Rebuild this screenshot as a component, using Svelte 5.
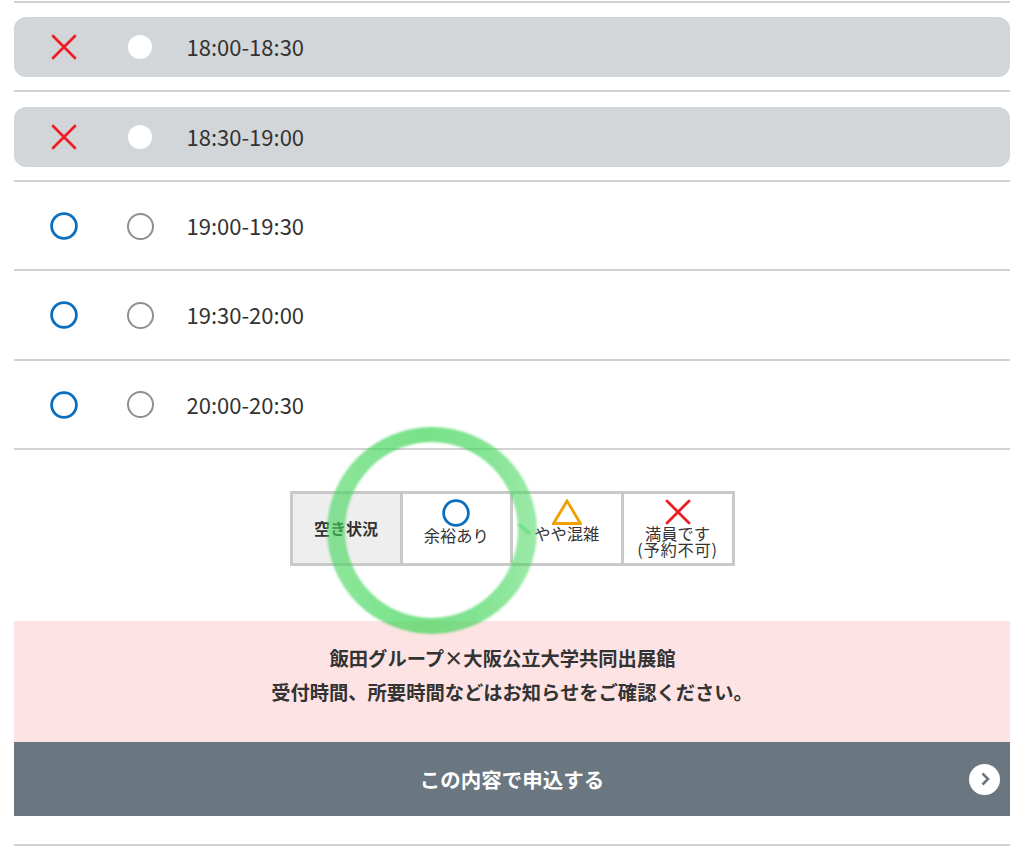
<script>
  const rows = [
    { time: '18:00-18:30', full: true },
    { time: '18:30-19:00', full: true },
    { time: '19:00-19:30', full: false },
    { time: '19:30-20:00', full: false },
    { time: '20:00-20:30', full: false }
  ];
</script>

<main>
  <ul class="slots">
    {#each rows as row}
      <li class="slot">
        <div class="slot_inner" class:full={row.full}>
          <span class="status">
            {#if row.full}
              <svg width="26" height="26" viewBox="0 0 26 26"><path d="M2 2 L24 24 M24 2 L2 24" stroke="#ee1c25" stroke-width="2.8" stroke-linecap="round" fill="none"/></svg>
            {:else}
              <svg width="28" height="28" viewBox="0 0 28 28"><circle cx="14" cy="14" r="12.4" stroke="#0b6fbe" stroke-width="2.8" fill="none"/></svg>
            {/if}
          </span>
          <span class="radio"></span>
          <span class="time">{row.time}</span>
        </div>
      </li>
    {/each}
  </ul>

  <div class="legend">
    <div class="cell head">空き状況</div>
    <div class="cell">
      <svg width="28" height="28" viewBox="0 0 28 28"><circle cx="14" cy="14" r="12.4" stroke="#0b6fbe" stroke-width="2.8" fill="none"/></svg>
      <span>余裕あり</span>
    </div>
    <div class="cell">
      <svg width="30" height="26" viewBox="0 0 30 26"><path d="M15 2 L28.5 24.5 L1.5 24.5 Z" stroke="#f0a000" stroke-width="2.8" fill="none"/></svg>
      <span>やや混雑</span>
    </div>
    <div class="cell">
      <svg width="26" height="26" viewBox="0 0 26 26"><path d="M2 2 L24 24 M24 2 L2 24" stroke="#ee1c25" stroke-width="2.8" stroke-linecap="round" fill="none"/></svg>
      <span>満員です<br /><span class="paren">(予約不可)</span></span>
    </div>
  </div>

  <div class="notice">
    <p class="first">飯田グループ×大阪公立大学共同出展館</p>
    <p>受付時間、所要時間などはお知らせをご確認ください。</p>
  </div>

  <button class="submit">
    この内容で申込する
    <span class="arrow">
      <svg width="14" height="14" viewBox="0 0 14 14"><path d="M4.5 1.5 L10 7 L4.5 12.5" stroke="#6a7780" stroke-width="2.6" fill="none"/></svg>
    </span>
  </button>

  <div class="bottom_line"></div>

  <svg class="ring" width="230" height="227" viewBox="0 0 230 227">
    <defs>
      <filter id="soft"><feGaussianBlur stdDeviation="0.8" /></filter>
      <linearGradient id="ring_fill" x1="0" y1="0" x2="1" y2="0">
        <stop offset="0" stop-color="#42d65a" stop-opacity="0.6" />
        <stop offset="0.45" stop-color="#42d65a" stop-opacity="0.72" />
        <stop offset="0.75" stop-color="#42d65a" stop-opacity="0.65" />
        <stop offset="1" stop-color="#42d65a" stop-opacity="0.52" />
      </linearGradient>
    </defs>
    <path
      filter="url(#soft)"
      fill="url(#ring_fill)"
      fill-rule="evenodd"
      d="M10 112.5 A105 103.5 0 1 1 220 112.5 A105 103.5 0 1 1 10 112.5 Z M28 112 A86.5 88 0 1 0 201 112 A86.5 88 0 1 0 28 112 Z"
    />
    <path filter="url(#soft)" d="M202 106 L213 116" stroke="#42d65a" stroke-opacity="0.55" stroke-width="3" fill="none" />
  </svg>
</main>

<style>
  :global(body) {
    margin: 0;
    background: #fff;
  }
  main {
    position: relative;
    width: 1024px;
    height: 849px;
    overflow: hidden;
    padding: 1px 14px 0;
    box-sizing: border-box;
    font-family: "Noto Sans CJK JP", "Noto Sans", sans-serif;
    color: #333;
  }
  .slots {
    list-style: none;
    margin: 0;
    padding: 0;
    border-top: 2px solid #d2d2d2;
  }
  .slot {
    height: 89.4px;
    box-sizing: border-box;
    border-bottom: 2px solid #d2d2d2;
    padding-top: 14.3px;
  }
  .slot_inner {
    display: flex;
    align-items: center;
    height: 60px;
    border-radius: 12px;
  }
  .slot_inner.full {
    background: #d2d6d9;
  }
  .status {
    width: 100px;
    display: flex;
    justify-content: center;
  }
  .status svg {
    display: block;
  }
  .radio {
    box-sizing: border-box;
    width: 27px;
    height: 27px;
    border: 2px solid #8f8f8f;
    border-radius: 50%;
    background: #fff;
    margin: 0 1px 0 13px;
  }
  .full .radio {
    width: 24px;
    height: 24px;
    margin: 0 3px 0 14px;
    border: none;
  }
  .time {
    margin-left: 31.5px;
    font-size: 22px;
    position: relative;
    top: -1px;
  }
  .legend {
    display: grid;
    grid-template-columns: 107px 110.5px 110.5px 1fr;
    width: 445px;
    height: 75px;
    margin: 41px auto 0 275.5px;
    border: 3px solid #c9c9c9;
    box-sizing: border-box;
  }
  .cell {
    display: flex;
    flex-direction: column;
    align-items: center;
    padding-top: 5px;
    font-size: 16.3px;
    line-height: 16px;
    text-align: center;
    border-left: 3px solid #c9c9c9;
  }
  .cell svg {
    display: block;
    flex: none;
  }
  .paren {
    letter-spacing: 0.7px;
  }
  .cell.head {
    border-left: none;
    padding-top: 0;
    justify-content: center;
    background: #eee;
    font-weight: 700;
    font-size: 16px;
  }
  .notice {
    margin-top: 55px;
    height: 121px;
    background: #fde3e3;
    display: flex;
    flex-direction: column;
    gap: 9px;
    padding-top: 25px;
    box-sizing: border-box;
    font-size: 19.3px;
    font-weight: 700;
    text-align: center;
  }
  .notice p {
    margin: 0;
    line-height: 25px;
  }
  .notice .first {
    padding-right: 19px;
  }
  .submit {
    position: relative;
    display: block;
    width: 100%;
    height: 74.5px;
    border: none;
    background: #6a7780;
    color: #fff;
    font: 700 20.5px "Noto Sans CJK JP", sans-serif;
    text-align: center;
  }
  .arrow {
    position: absolute;
    right: 10px;
    top: 22px;
    width: 31px;
    height: 31px;
    border-radius: 50%;
    background: #fff;
    display: flex;
    align-items: center;
    justify-content: center;
  }
  .bottom_line {
    margin-top: 27.5px;
    border-top: 2px solid #d2d2d2;
  }
  .ring {
    position: absolute;
    left: 317px;
    top: 418px;
    pointer-events: none;
  }
</style>
